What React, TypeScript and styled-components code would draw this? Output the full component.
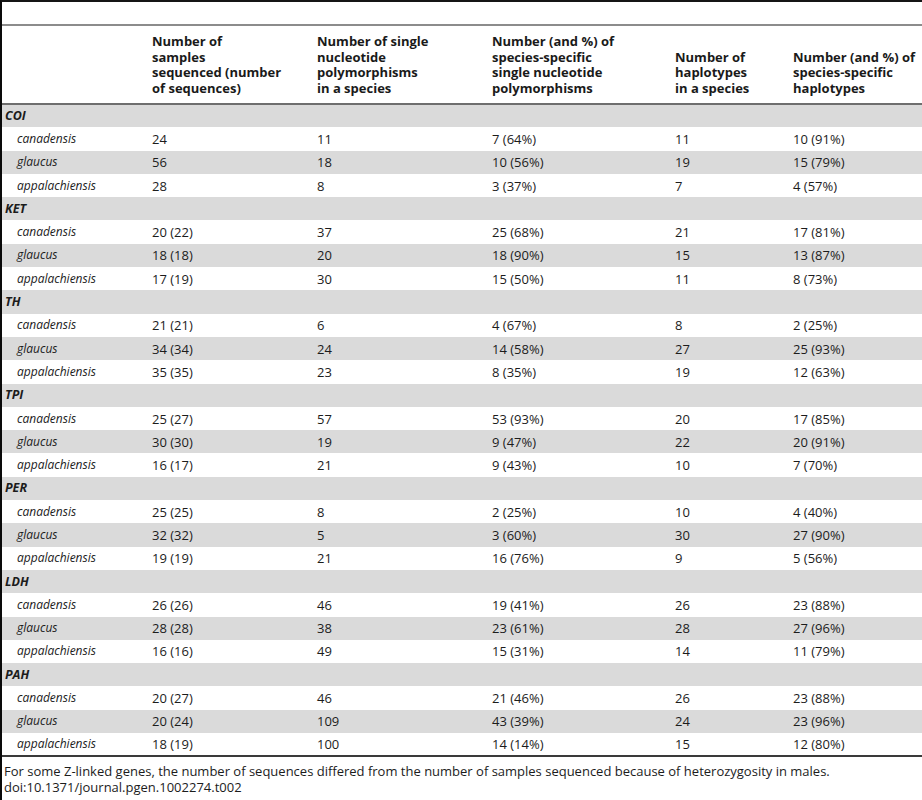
import React from "react";
import styled, { createGlobalStyle } from "styled-components";

const Global = createGlobalStyle`
  html, body { margin: 0; padding: 0; background: #fff; }
  body { font-family: "Open Sans", "Noto Sans", "Liberation Sans", sans-serif; color: #1c1c1c; }
`;

const Page = styled.div`
  box-sizing: border-box;
  min-height: 800px;
  border-top: 2px solid #151515;
  border-left: 2px solid #0a0a0a;
  padding-top: 22px;
`;

const Table = styled.table`
  width: 920px;
  border-collapse: collapse;
  table-layout: fixed;
  font-size: 13px;
  border-bottom: 2px solid #3a3a3a;
`;

const HeadRow = styled.tr`
  border-top: 2px solid #8c8c8c;
  border-bottom: 2px solid #6e6e6e;
`;

const Th = styled.th`
  text-align: left;
  font-weight: 700;
  font-size: 13px;
  line-height: 15.5px;
  padding: 8px 3px 7px;
  vertical-align: bottom;
  color: #1a1a1a;
  white-space: nowrap;
`;

const Row = styled.tr<{ $shade: boolean }>`
  height: 23.3px;
  background: ${(p) => (p.$shade ? "#dadada" : "#ffffff")};
`;

const Td = styled.td`
  padding: 0 3px;
  line-height: 16px;
  vertical-align: middle;
  white-space: nowrap;
`;

const Gene = styled(Td)`
  font-weight: 700;
  font-style: italic;
  font-size: 12.5px;
`;

const Species = styled(Td)`
  font-style: italic;
  font-size: 12px;
  padding-left: 15px;
`;

const Note = styled.div`
  padding: 6px 0 0 2px;
  font-size: 13px;
  line-height: 16px;
  color: #1c1c1c;
`;

type Sp = [string, string, string, string, string, string];
const data: { gene: string; rows: Sp[] }[] = [
  {
    gene: "COI",
    rows: [
      ["canadensis", "24", "11", "7 (64%)", "11", "10 (91%)"],
      ["glaucus", "56", "18", "10 (56%)", "19", "15 (79%)"],
      ["appalachiensis", "28", "8", "3 (37%)", "7", "4 (57%)"],
    ],
  },
  {
    gene: "KET",
    rows: [
      ["canadensis", "20 (22)", "37", "25 (68%)", "21", "17 (81%)"],
      ["glaucus", "18 (18)", "20", "18 (90%)", "15", "13 (87%)"],
      ["appalachiensis", "17 (19)", "30", "15 (50%)", "11", "8 (73%)"],
    ],
  },
  {
    gene: "TH",
    rows: [
      ["canadensis", "21 (21)", "6", "4 (67%)", "8", "2 (25%)"],
      ["glaucus", "34 (34)", "24", "14 (58%)", "27", "25 (93%)"],
      ["appalachiensis", "35 (35)", "23", "8 (35%)", "19", "12 (63%)"],
    ],
  },
  {
    gene: "TPI",
    rows: [
      ["canadensis", "25 (27)", "57", "53 (93%)", "20", "17 (85%)"],
      ["glaucus", "30 (30)", "19", "9 (47%)", "22", "20 (91%)"],
      ["appalachiensis", "16 (17)", "21", "9 (43%)", "10", "7 (70%)"],
    ],
  },
  {
    gene: "PER",
    rows: [
      ["canadensis", "25 (25)", "8", "2 (25%)", "10", "4 (40%)"],
      ["glaucus", "32 (32)", "5", "3 (60%)", "30", "27 (90%)"],
      ["appalachiensis", "19 (19)", "21", "16 (76%)", "9", "5 (56%)"],
    ],
  },
  {
    gene: "LDH",
    rows: [
      ["canadensis", "26 (26)", "46", "19 (41%)", "26", "23 (88%)"],
      ["glaucus", "28 (28)", "38", "23 (61%)", "28", "27 (96%)"],
      ["appalachiensis", "16 (16)", "49", "15 (31%)", "14", "11 (79%)"],
    ],
  },
  {
    gene: "PAH",
    rows: [
      ["canadensis", "20 (27)", "46", "21 (46%)", "26", "23 (88%)"],
      ["glaucus", "20 (24)", "109", "43 (39%)", "24", "23 (96%)"],
      ["appalachiensis", "18 (19)", "100", "14 (14%)", "15", "12 (80%)"],
    ],
  },
];

const widths = [147, 165, 175, 183, 118, 132];

export default function App() {
  return (
    <>
      <Global />
      <Page>
        <Table>
          <colgroup>
            {widths.map((w, i) => (
              <col key={i} style={{ width: w }} />
            ))}
          </colgroup>
          <thead>
            <HeadRow>
              <Th />
              <Th>
                Number of
                <br />
                samples
                <br />
                sequenced (number
                <br />
                of sequences)
              </Th>
              <Th>
                Number of single
                <br />
                nucleotide
                <br />
                polymorphisms
                <br />
                in a species
              </Th>
              <Th>
                Number (and %) of
                <br />
                species-specific
                <br />
                single nucleotide
                <br />
                polymorphisms
              </Th>
              <Th>
                Number of
                <br />
                haplotypes
                <br />
                in a species
              </Th>
              <Th>
                Number (and %) of
                <br />
                species-specific
                <br />
                haplotypes
              </Th>
            </HeadRow>
          </thead>
          <tbody>
            {data.map((g) => (
              <React.Fragment key={g.gene}>
                <Row $shade>
                  <Gene>{g.gene}</Gene>
                  <Td />
                  <Td />
                  <Td />
                  <Td />
                  <Td />
                </Row>
                {g.rows.map((r, i) => (
                  <Row key={r[0]} $shade={i === 1}>
                    <Species>{r[0]}</Species>
                    {r.slice(1).map((v, j) => (
                      <Td key={j}>{v}</Td>
                    ))}
                  </Row>
                ))}
              </React.Fragment>
            ))}
          </tbody>
        </Table>
        <Note>
          For some Z-linked genes, the number of sequences differed from the number of samples sequenced because of heterozygosity in males.
          <br />
          doi:10.1371/journal.pgen.1002274.t002
        </Note>
      </Page>
    </>
  );
}
